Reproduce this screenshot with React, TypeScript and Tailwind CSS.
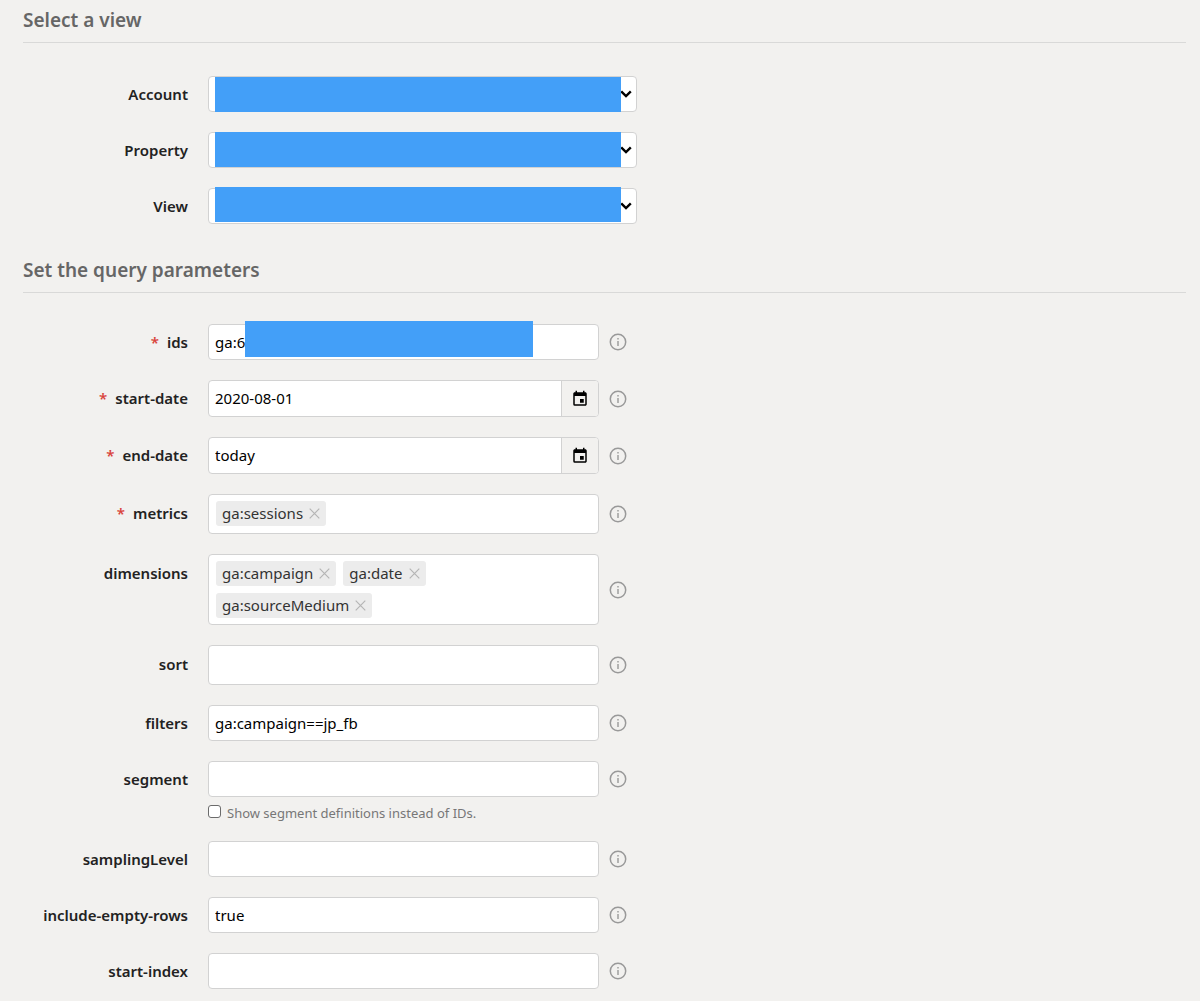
import type { ReactNode } from "react";
import { MdEvent } from "react-icons/md";

const fieldClass =
  "h-9 w-full rounded-[4px] border border-[#d2d2d2] bg-white px-1.5 text-[15px] text-black outline-none";

function SectionTitle({ children }: { children: ReactNode }) {
  return (
    <h2 className="border-b border-[#d9d9d8] pb-2.5 text-[19px] leading-6 font-semibold text-[#666]">
      {children}
    </h2>
  );
}

function Label({ name, required = false, tall = false }: { name: string; required?: boolean; tall?: boolean }) {
  return (
    <label
      htmlFor={name}
      className={`w-[165px] shrink-0 text-right text-[15px] font-semibold text-[#222] ${tall ? "leading-[38px]" : "leading-9"}`}
    >
      {required && <span className="mr-2 text-[#d9443c]">*</span>}
      {name}
    </label>
  );
}

function Info({ name }: { name: string }) {
  return (
    <button type="button" aria-label={`About ${name}`} className="ml-2.5 shrink-0 text-[#999]">
      <svg width="18" height="18" viewBox="0 0 18 18" fill="none" stroke="currentColor" className="block">
        <circle cx="9" cy="9" r="7.7" strokeWidth="1.5" />
        <path d="M9 8v5" strokeWidth="1.4" />
        <path d="M9 5v1.5" strokeWidth="1.4" />
      </svg>
    </button>
  );
}

function Row({
  name,
  required,
  tall,
  below,
  children,
}: {
  name: string;
  required?: boolean;
  tall?: boolean;
  below?: ReactNode;
  children: ReactNode;
}) {
  return (
    <div className="flex items-start gap-5">
      <Label name={name} required={required} tall={tall} />
      <div className="min-w-0">
        <div className="flex items-center">
          <div className="w-[391px]">{children}</div>
          <Info name={name} />
        </div>
        {below}
      </div>
    </div>
  );
}

function SelectRow({ name, cover }: { name: string; cover: string }) {
  return (
    <div className="flex items-start gap-5">
      <Label name={name} />
      <div className="relative w-[429px]">
        <select id={name} className={`${fieldClass} block appearance-none`} />
        <svg
          width="12"
          height="8"
          viewBox="0 0 12 8"
          fill="none"
          stroke="#000"
          strokeWidth="2.4"
          className="pointer-events-none absolute top-3.5 right-[5px]"
        >
          <path d="M1.2 1.3 6 6l4.8-4.7" />
        </svg>
        <div className={`absolute right-4 left-[7px] bg-[#439ff8] ${cover}`} />
      </div>
    </div>
  );
}

function TextRow({ name, value = "", below }: { name: string; value?: string; below?: ReactNode }) {
  return (
    <Row name={name} below={below}>
      <input id={name} type="text" defaultValue={value} className={`${fieldClass} block`} />
    </Row>
  );
}

function DateRow({ name, value }: { name: string; value: string }) {
  return (
    <Row name={name} required>
      <div className="flex h-[37px] overflow-hidden rounded-[4px] border border-[#d2d2d2] bg-white">
        <input
          id={name}
          type="text"
          defaultValue={value}
          className="min-w-0 flex-1 px-1.5 text-[15px] text-black outline-none"
        />
        <button
          type="button"
          aria-label={`Pick ${name}`}
          className="flex w-[37px] items-center justify-center border-l border-[#d2d2d2] bg-[#f2f1ef] text-black"
        >
          <MdEvent size={18} />
        </button>
      </div>
    </Row>
  );
}

function TagRow({ name, tags, required }: { name: string; tags: string[]; required?: boolean }) {
  return (
    <Row name={name} required={required} tall>
      <div className="flex min-h-10 flex-wrap content-start gap-[7px] rounded-[4px] border border-[#d2d2d2] bg-white py-1.5 pr-[100px] pl-[7px]">
        {tags.map((tag) => (
          <span
            key={tag}
            className="flex h-[25px] items-center gap-1.5 rounded-[3px] bg-[#ececec] px-1.5 text-[15px] text-[#333]"
          >
            {tag}
            <button type="button" aria-label={`Remove ${tag}`} className="text-[#b5b5b5]">
              <svg width="11" height="11" viewBox="0 0 11 11" stroke="currentColor" strokeWidth="1.2" className="block">
                <path d="M.7.7l9.6 9.6M10.3.7.7 10.3" />
              </svg>
            </button>
          </span>
        ))}
        <input id={name} type="text" className="h-[25px] w-1 outline-none" />
      </div>
    </Row>
  );
}

export default function App() {
  return (
    <main className="min-h-screen bg-[#f2f1ef] pt-2 pr-3.5 pb-3 pl-[23px] font-['Noto_Sans',sans-serif]">
      <SectionTitle>Select a view</SectionTitle>
      <div className="mt-[33px] flex flex-col gap-5">
        <SelectRow name="Account" cover="top-px h-[35px]" />
        <SelectRow name="Property" cover="top-0 h-[35px]" />
        <SelectRow name="View" cover="-top-px h-[35px]" />
      </div>

      <div className="mt-[34px]">
        <SectionTitle>Set the query parameters</SectionTitle>
      </div>
      <div className="mt-[31px] flex flex-col gap-5">
        <Row name="ids" required>
          <div className="relative">
            <input id="ids" type="text" defaultValue="ga:6" className={`${fieldClass} block`} />
            <div className="absolute -top-[3px] left-[37px] h-9 w-72 bg-[#439ff8]" />
          </div>
        </Row>
        <DateRow name="start-date" value="2020-08-01" />
        <DateRow name="end-date" value="today" />
        <TagRow name="metrics" tags={["ga:sessions"]} required />
        <TagRow name="dimensions" tags={["ga:campaign", "ga:date", "ga:sourceMedium"]} />
        <TagRow name="sort" tags={[]} />
        <TextRow name="filters" value="ga:campaign==jp_fb" />
        <TextRow
          name="segment"
          below={
            <label className="flex h-6 items-end gap-1.5 text-[13px] leading-4 text-[#777]">
              <input
                type="checkbox"
                className="mb-[3px] size-[13px] shrink-0 appearance-none rounded-[3px] border border-[#6b6b6b] bg-white"
              />
              Show segment definitions instead of IDs.
            </label>
          }
        />
        <TextRow name="samplingLevel" />
        <TextRow name="include-empty-rows" value="true" />
        <TextRow name="start-index" />
      </div>
    </main>
  );
}
